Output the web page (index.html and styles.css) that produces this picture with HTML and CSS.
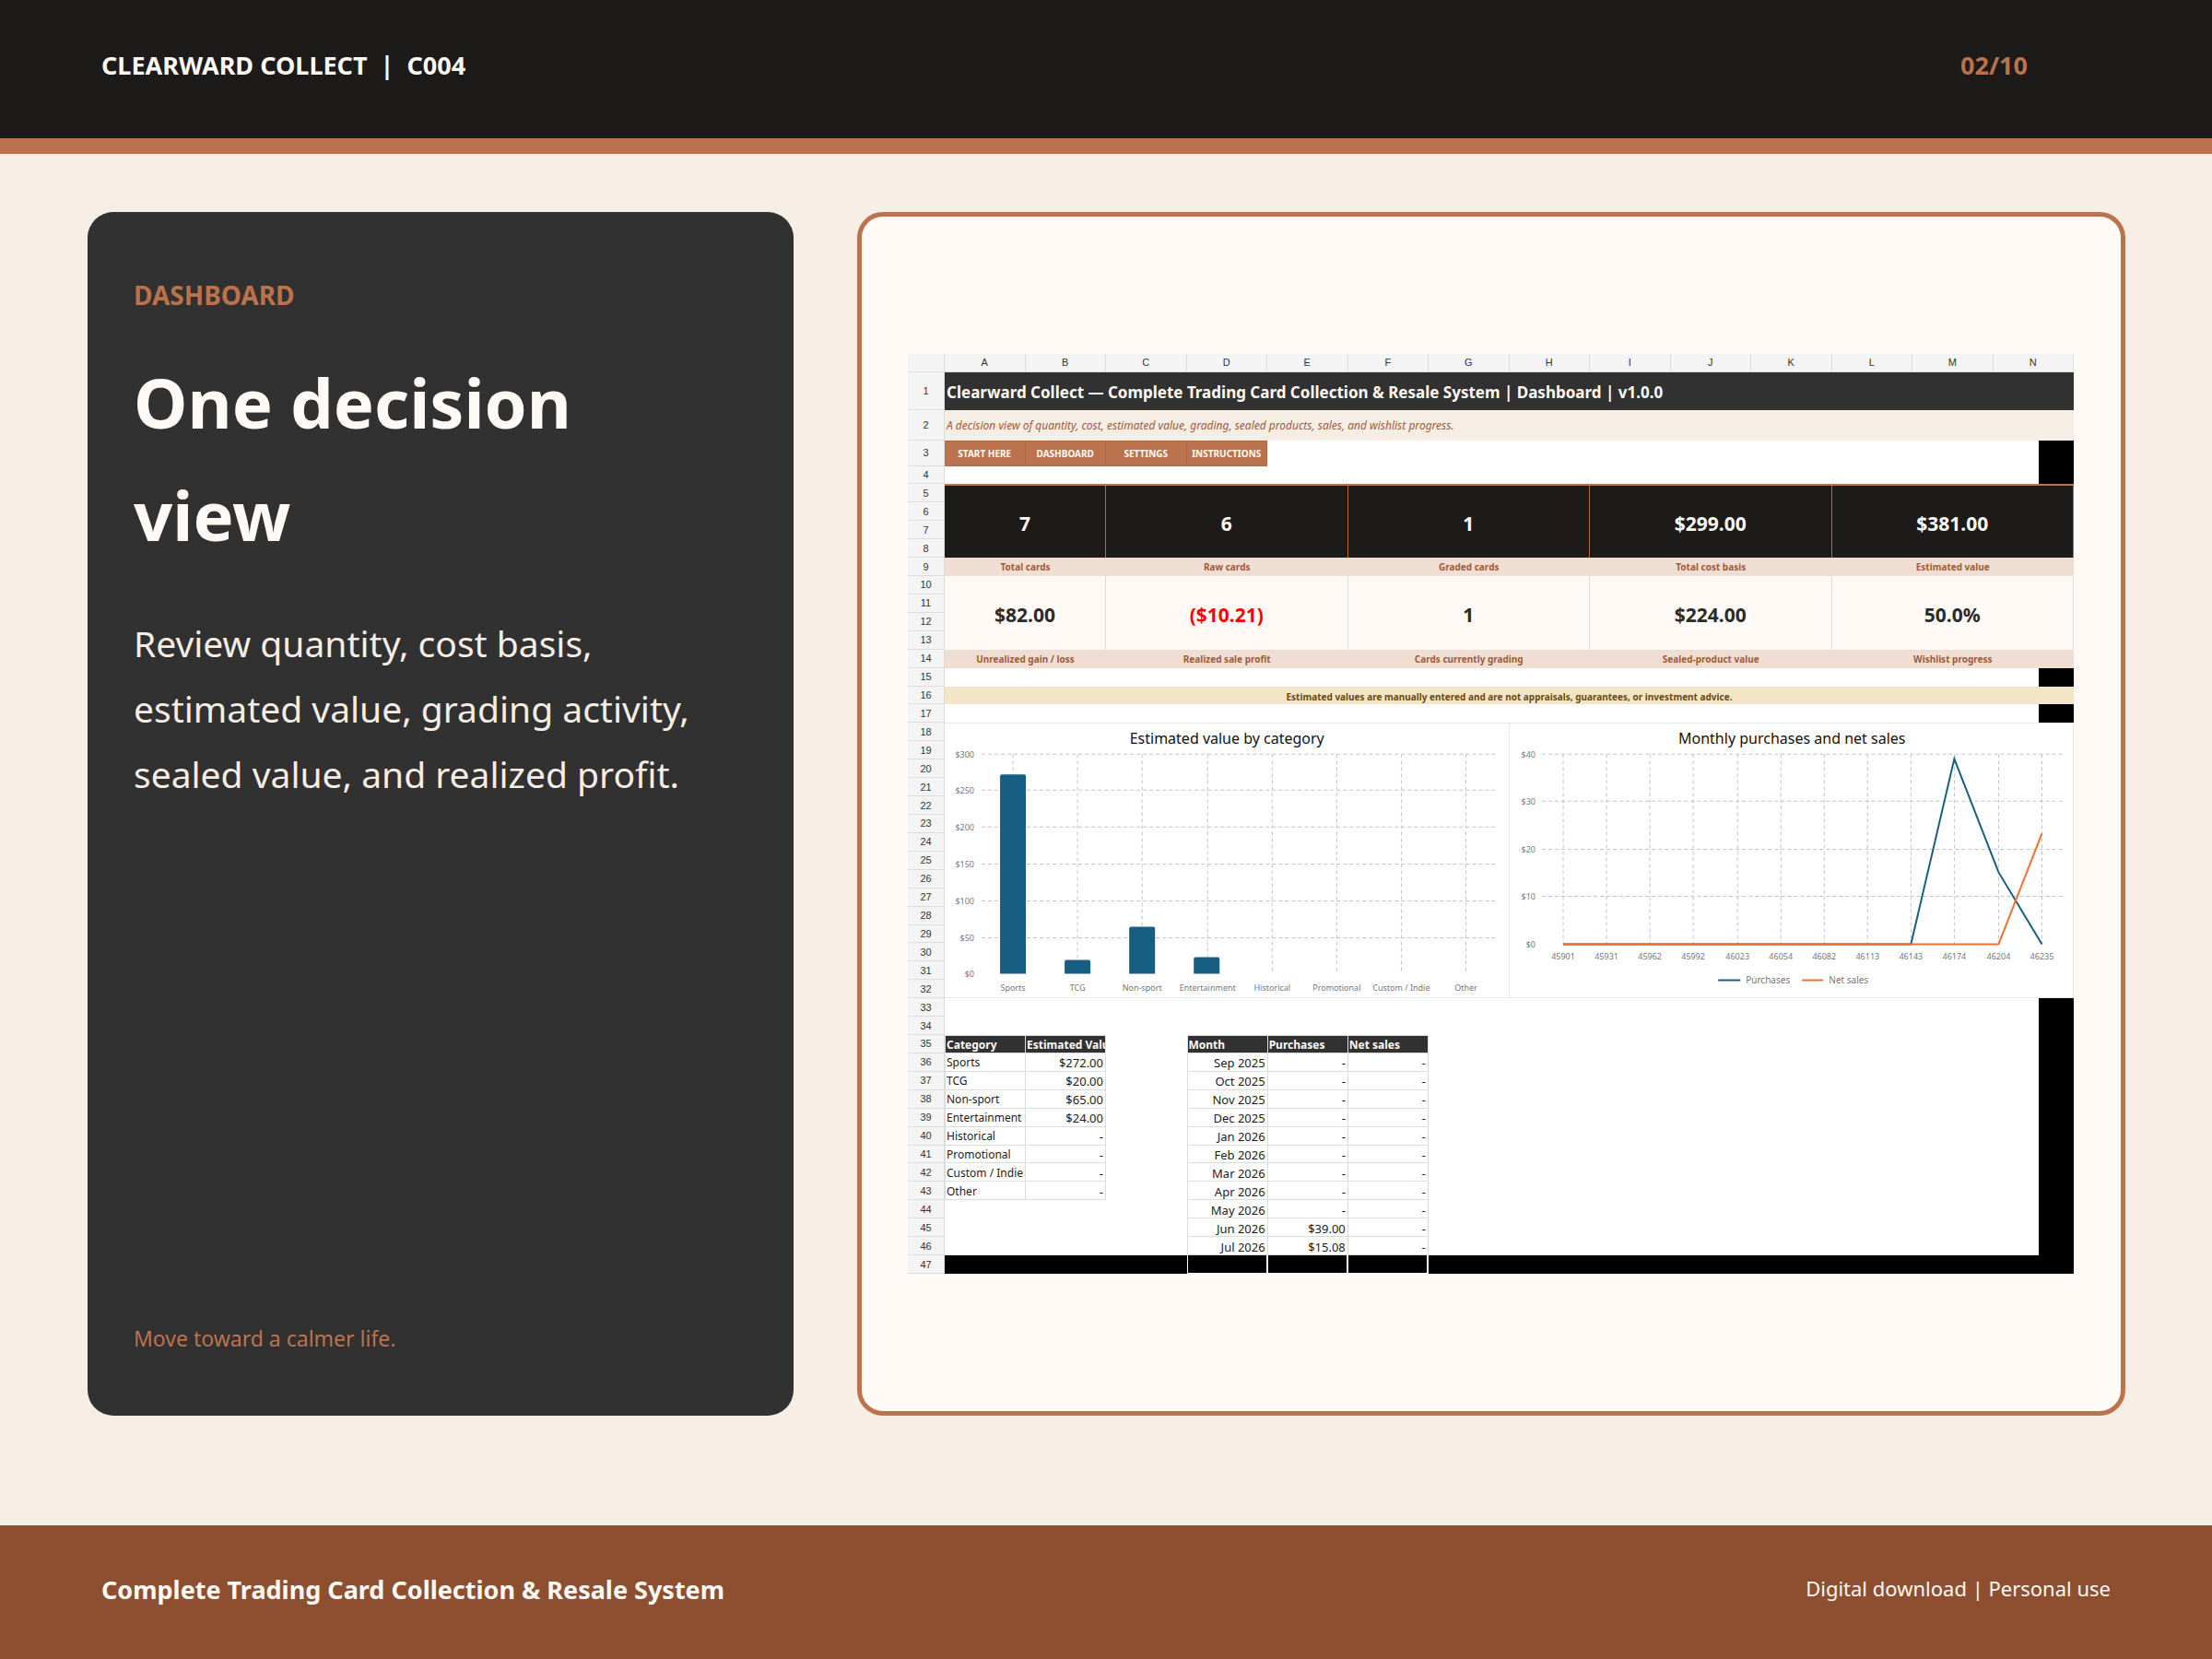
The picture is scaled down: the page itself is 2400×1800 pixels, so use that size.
FILE: index.html
```html
<!DOCTYPE html>
<html lang="en">
<head>
    <meta charset="UTF-8" />
    <meta name="viewport" content="width=device-width, initial-scale=1.0" />
    <title>Clearward Collect | C004</title>
    <link rel="stylesheet" href="styles.css">
</head>
<body>
    <header class="topbar">
        <span class="brand">CLEARWARD COLLECT&nbsp; |&nbsp; C004</span>
        <span class="page-number">02/10</span>
    </header>

    <main class="content">
        <section class="intro">
            <p class="eyebrow">DASHBOARD</p>
            <h1>One decision<br>view</h1>
            <p class="lead">Review quantity, cost basis, estimated value, grading activity, sealed value, and realized profit.</p>
            <p class="tagline">Move toward a calmer life.</p>
        </section>

        <section class="preview">
            <div class="sheet">
                <div class="paper"></div>

                <div class="col-heads">
                    <span></span><span>A</span><span>B</span><span>C</span><span>D</span><span>E</span><span>F</span><span>G</span><span>H</span><span>I</span><span>J</span><span>K</span><span>L</span><span>M</span><span>N</span>
                </div>
                <div class="row-heads">
                    <span>1</span><span>2</span><span>3</span><span>4</span><span>5</span><span>6</span><span>7</span><span>8</span><span>9</span><span>10</span>
                    <span>11</span><span>12</span><span>13</span><span>14</span><span>15</span><span>16</span><span>17</span><span>18</span><span>19</span><span>20</span>
                    <span>21</span><span>22</span><span>23</span><span>24</span><span>25</span><span>26</span><span>27</span><span>28</span><span>29</span><span>30</span>
                    <span>31</span><span>32</span><span>33</span><span>34</span><span>35</span><span>36</span><span>37</span><span>38</span><span>39</span><span>40</span>
                    <span>41</span><span>42</span><span>43</span><span>44</span><span>45</span><span>46</span><span>47</span>
                </div>

                <h2 class="sheet-title">Clearward Collect — Complete Trading Card Collection &amp; Resale System | Dashboard | v1.0.0</h2>
                <p class="sheet-subtitle">A decision view of quantity, cost, estimated value, grading, sealed products, sales, and wishlist progress.</p>

                <nav class="sheet-nav">
                    <a href="#start">START HERE</a>
                    <a href="#dashboard">DASHBOARD</a>
                    <a href="#settings">SETTINGS</a>
                    <a href="#instructions">INSTRUCTIONS</a>
                </nav>

                <div class="kpi-values dark">
                    <span>7</span><span>6</span><span>1</span><span>$299.00</span><span>$381.00</span>
                </div>
                <div class="kpi-labels first">
                    <span>Total cards</span><span>Raw cards</span><span>Graded cards</span><span>Total cost basis</span><span>Estimated value</span>
                </div>
                <div class="kpi-values light">
                    <span>$82.00</span><span class="negative">($10.21)</span><span>1</span><span>$224.00</span><span>50.0%</span>
                </div>
                <div class="kpi-labels second">
                    <span>Unrealized gain / loss</span><span>Realized sale profit</span><span>Cards currently grading</span><span>Sealed-product value</span><span>Wishlist progress</span>
                </div>

                <p class="notice">Estimated values are manually entered and are not appraisals, guarantees, or investment advice.</p>

                <div class="chart chart-category">
                    <svg viewBox="0 0 612 298" role="img" aria-label="Estimated value by category">
                        <text class="chart-title" x="306" y="23">Estimated value by category</text>
                        <path class="grid" d="M40 34H600M40 73H600M40 113H600M40 153H600M40 193H600M40 233H600" />
                        <path class="grid" d="M74 34V272M144 34V272M214 34V272M285 34V272M355 34V272M425 34V272M495 34V272M565 34V272" />
                        <g class="y-labels">
                            <text x="32" y="38">$300</text>
                            <text x="32" y="77">$250</text>
                            <text x="32" y="117">$200</text>
                            <text x="32" y="157">$150</text>
                            <text x="32" y="197">$100</text>
                            <text x="32" y="237">$50</text>
                            <text x="32" y="276">$0</text>
                        </g>
                        <g class="bars">
                            <path d="M60 272V58q0-2 2-2h24q2 0 2 2V272z" />
                            <path d="M130 272V259q0-2 2-2h24q2 0 2 2V272z" />
                            <path d="M200 272V223q0-2 2-2h24q2 0 2 2V272z" />
                            <path d="M270 272V256q0-2 2-2h24q2 0 2 2V272z" />
                        </g>
                        <g class="x-labels">
                            <text x="74" y="290">Sports</text>
                            <text x="144" y="290">TCG</text>
                            <text x="214" y="290">Non-sport</text>
                            <text x="285" y="290">Entertainment</text>
                            <text x="355" y="290">Historical</text>
                            <text x="425" y="290">Promotional</text>
                            <text x="495" y="290">Custom / Indie</text>
                            <text x="565" y="290">Other</text>
                        </g>
                    </svg>
                </div>

                <div class="chart chart-monthly">
                    <svg viewBox="0 0 612 298" role="img" aria-label="Monthly purchases and net sales">
                        <text class="chart-title" x="306" y="23">Monthly purchases and net sales</text>
                        <path class="grid" d="M35 34H600M35 85H600M35 137H600M35 188H600" />
                        <path class="grid" d="M58 34V240M105 34V240M152 34V240M199 34V240M247 34V240M294 34V240M341 34V240M388 34V240M435 34V240M482 34V240M530 34V240M577 34V240" />
                        <g class="y-labels">
                            <text x="28" y="38">$40</text>
                            <text x="28" y="89">$30</text>
                            <text x="28" y="141">$20</text>
                            <text x="28" y="192">$10</text>
                            <text x="28" y="244">$0</text>
                        </g>
                        <polyline class="line purchases" points="58,240 435,240 482,39 530,162 577,240" />
                        <polyline class="line net-sales" points="58,240 530,240 577,120" />
                        <g class="x-labels">
                            <text x="58" y="257">45901</text>
                            <text x="105" y="257">45931</text>
                            <text x="152" y="257">45962</text>
                            <text x="199" y="257">45992</text>
                            <text x="247" y="257">46023</text>
                            <text x="294" y="257">46054</text>
                            <text x="341" y="257">46082</text>
                            <text x="388" y="257">46113</text>
                            <text x="435" y="257">46143</text>
                            <text x="482" y="257">46174</text>
                            <text x="530" y="257">46204</text>
                            <text x="577" y="257">46235</text>
                        </g>
                        <path class="line purchases" d="M226 279H250" />
                        <text class="legend" x="256" y="283">Purchases</text>
                        <path class="line net-sales" d="M317 279H340" />
                        <text class="legend" x="346" y="283">Net sales</text>
                    </svg>
                </div>

                <table class="data category-table">
                    <thead>
                        <tr><th>Category</th><th>Estimated Value</th></tr>
                    </thead>
                    <tbody>
                        <tr><td>Sports</td><td>$272.00</td></tr>
                        <tr><td>TCG</td><td>$20.00</td></tr>
                        <tr><td>Non-sport</td><td>$65.00</td></tr>
                        <tr><td>Entertainment</td><td>$24.00</td></tr>
                        <tr><td>Historical</td><td>-</td></tr>
                        <tr><td>Promotional</td><td>-</td></tr>
                        <tr><td>Custom / Indie</td><td>-</td></tr>
                        <tr><td>Other</td><td>-</td></tr>
                    </tbody>
                </table>

                <table class="data month-table">
                    <thead>
                        <tr><th>Month</th><th>Purchases</th><th>Net sales</th></tr>
                    </thead>
                    <tbody>
                        <tr><td>Sep 2025</td><td>-</td><td>-</td></tr>
                        <tr><td>Oct 2025</td><td>-</td><td>-</td></tr>
                        <tr><td>Nov 2025</td><td>-</td><td>-</td></tr>
                        <tr><td>Dec 2025</td><td>-</td><td>-</td></tr>
                        <tr><td>Jan 2026</td><td>-</td><td>-</td></tr>
                        <tr><td>Feb 2026</td><td>-</td><td>-</td></tr>
                        <tr><td>Mar 2026</td><td>-</td><td>-</td></tr>
                        <tr><td>Apr 2026</td><td>-</td><td>-</td></tr>
                        <tr><td>May 2026</td><td>-</td><td>-</td></tr>
                        <tr><td>Jun 2026</td><td>$39.00</td><td>-</td></tr>
                        <tr><td>Jul 2026</td><td>$15.08</td><td>-</td></tr>
                    </tbody>
                </table>
                <div class="cut-row"><span></span><span></span><span></span></div>
            </div>
        </section>
    </main>

    <footer class="footer">
        <strong>Complete Trading Card Collection &amp; Resale System</strong>
        <span>Digital download | Personal use</span>
    </footer>
</body>
</html>
```
FILE: styles.css
```css
:root {
  --ink: #1c1b19;
  --charcoal: #313131;
  --copper: #bb734d;
  --rust: #8e4f31;
  --sand: #f6ede4;
  --cream: #fffaf5;
  --blush: #f1ded3;
  --line: #dadddd;
}

* {
  box-sizing: border-box;
}

body {
  margin: 0;
  min-height: 100vh;
  display: flex;
  flex-direction: column;
  font-family: "Noto Sans", sans-serif;
  background-color: var(--sand);
  color: var(--cream);
}

h1, h2, p {
  margin: 0;
}

/* Header and footer bars */
.topbar {
  display: flex;
  justify-content: space-between;
  padding: 51px 200px 59px 110px;
  border-bottom: 17px solid var(--copper);
  background-color: var(--ink);
  font-size: 27px;
  line-height: 40px;
  font-weight: 700;
}

.page-number {
  color: var(--copper);
}

.footer {
  display: flex;
  justify-content: space-between;
  align-items: flex-start;
  min-height: 145px;
  padding: 50px 110px;
  background-color: var(--rust);
  font-size: 27px;
  line-height: 40px;
}

.footer span {
  font-size: 22px;
  line-height: 36px;
}

/* Two cards */
.content {
  flex: 1;
  display: grid;
  grid-template-columns: 766fr 1376fr;
  gap: 69px;
  padding: 63px 94px 119px 95px;
}

.intro {
  display: flex;
  flex-direction: column;
  padding: 70px 50px 64px;
  border-radius: 28px;
  background-color: var(--charcoal);
}

.eyebrow {
  color: var(--copper);
  font-size: 28px;
  line-height: 40px;
  font-weight: 700;
}

h1 {
  margin-top: 36px;
  font-size: 74px;
  line-height: 122px;
  font-weight: 700;
}

.lead {
  margin-top: 42px;
  color: var(--sand);
  font-size: 39px;
  line-height: 71px;
}

.tagline {
  margin-top: auto;
  color: var(--copper);
  font-size: 23px;
  line-height: 40px;
}

.preview {
  display: flex;
  align-items: center;
  padding: 49px 51px 49px 50px;
  border: 5px solid var(--copper);
  border-radius: 28px;
  background-color: var(--cream);
}

/* Spreadsheet: a narrow row-number column, then columns A to N */
.sheet {
  flex: 1;
  display: grid;
  grid-template-columns: 40px repeat(14, minmax(0, 1fr));
  grid-template-rows: 20fr 41fr 33fr 28fr repeat(44, minmax(0, 20fr));
  aspect-ratio: 1265 / 998;
  background-color: #000;
  color: var(--ink);
}

.paper {
  grid-area: 2 / 2 / 48 / 16;
  margin-right: 38px;
  background-color: #fff;
}

.col-heads,
.row-heads {
  display: grid;
  background-color: #f4f4f4;
  color: #333;
  font-family: "Liberation Sans", Arial, sans-serif;
  font-size: 11px;
  line-height: 16px;
}

.col-heads {
  grid-area: 1 / 1 / 2 / 16;
  grid-template-columns: subgrid;
}

.row-heads {
  grid-area: 2 / 1 / 49 / 2;
  grid-template-rows: subgrid;
}

.col-heads span,
.row-heads span {
  display: flex;
  align-items: center;
  justify-content: center;
  min-height: 0;
  border-right: 1px solid var(--line);
  border-bottom: 1px solid var(--line);
}

.sheet-title {
  grid-area: 2 / 2 / 3 / 16;
  display: flex;
  align-items: center;
  padding: 3px 0 0 2px;
  background-color: var(--charcoal);
  color: var(--cream);
  font-size: 17px;
  line-height: 20px;
  white-space: nowrap;
}

.sheet-subtitle {
  grid-area: 3 / 2 / 4 / 16;
  display: flex;
  align-items: center;
  padding: 2px 0 0 2px;
  background-color: var(--sand);
  color: #a05a38;
  font-size: 12px;
  line-height: 16px;
  font-style: italic;
}

.sheet-nav {
  grid-area: 4 / 2 / 5 / 6;
  display: grid;
  grid-template-columns: repeat(4, 1fr);
}

.sheet-nav a {
  display: flex;
  align-items: center;
  justify-content: center;
  border: 1px solid #b0683f;
  border-left-width: 0;
  background-color: var(--copper);
  color: var(--cream);
  font-size: 10px;
  font-weight: 700;
  text-decoration: none;
}

.kpi-values,
.kpi-labels {
  display: grid;
  grid-template-columns: 2fr repeat(4, 3fr);
  font-weight: 700;
}

.kpi-values span,
.kpi-labels span {
  display: flex;
  align-items: center;
  justify-content: center;
}

.kpi-values {
  font-size: 21px;
  line-height: 24px;
}

.kpi-values span {
  padding-top: 4px;
  border-right: 1px solid var(--line);
}

.kpi-values.dark {
  grid-area: 6 / 2 / 10 / 16;
  border-top: 2px solid var(--copper);
  background-color: var(--ink);
  color: var(--cream);
}

.kpi-values.dark span {
  border-color: #b0683f;
}

.kpi-values.light {
  grid-area: 11 / 2 / 15 / 16;
  background-color: var(--cream);
  color: #2b2b2b;
}

.kpi-values .negative {
  color: #f00;
}

.kpi-labels {
  background-color: var(--blush);
  color: #a05a38;
  font-size: 10px;
  line-height: 12px;
}

.kpi-labels.first {
  grid-area: 10 / 2 / 11 / 16;
}

.kpi-labels.second {
  grid-area: 15 / 2 / 16 / 16;
}

.notice {
  grid-area: 17 / 2 / 18 / 16;
  display: flex;
  align-items: flex-end;
  justify-content: center;
  background-color: #f4e5c6;
  color: #6b4a10;
  font-size: 10px;
  line-height: 15px;
  font-weight: 700;
}

/* Charts */
.chart {
  min-height: 0;
  background-color: #fff;
  box-shadow: inset -1px 1px #e8e8e8, inset 0 -1px #e8e8e8;
}

.chart-category {
  grid-area: 19 / 2 / 34 / 9;
}

.chart-monthly {
  grid-area: 19 / 9 / 34 / 16;
}

.chart svg {
  display: block;
  width: 100%;
  height: 100%;
}

.chart text {
  fill: #777;
  font-size: 9px;
}

.chart .chart-title {
  fill: #111;
  font-size: 16px;
  text-anchor: middle;
}

.chart .legend {
  font-size: 10px;
}

.y-labels {
  text-anchor: end;
}

.x-labels {
  text-anchor: middle;
}

.grid {
  stroke: #c4c4c4;
  stroke-dasharray: 4 3;
}

.bars {
  fill: #165f82;
}

.line {
  fill: none;
  stroke-width: 2;
}

.purchases {
  stroke: #165f82;
}

.net-sales {
  stroke: #ed7230;
}

/* Tables under the charts */
.data {
  width: 100%;
  height: 100%;
  table-layout: fixed;
  border-collapse: collapse;
  background-color: #fff;
  font-size: 12px;
  line-height: 16px;
}

.category-table {
  grid-area: 36 / 2 / 45 / 4;
}

.month-table {
  grid-area: 36 / 5 / 48 / 8;
}

.data th,
.data td {
  overflow: hidden;
  padding: 2px 2px 0 1px;
  border: 1px solid var(--line);
  text-align: right;
  white-space: nowrap;
}

.data td {
  font-size: 13px;
}

.data th {
  background-color: var(--charcoal);
  color: var(--cream);
  text-align: left;
}

.category-table td:first-child {
  font-size: 12px;
  text-align: left;
}

.cut-row {
  grid-area: 48 / 5 / 49 / 8;
  display: grid;
  grid-template-columns: repeat(3, 1fr);
  border-left: 1px solid #fff;
}

.cut-row span {
  border-right: 2px solid #fff;
  border-bottom: 1px solid #fff;
}
```
